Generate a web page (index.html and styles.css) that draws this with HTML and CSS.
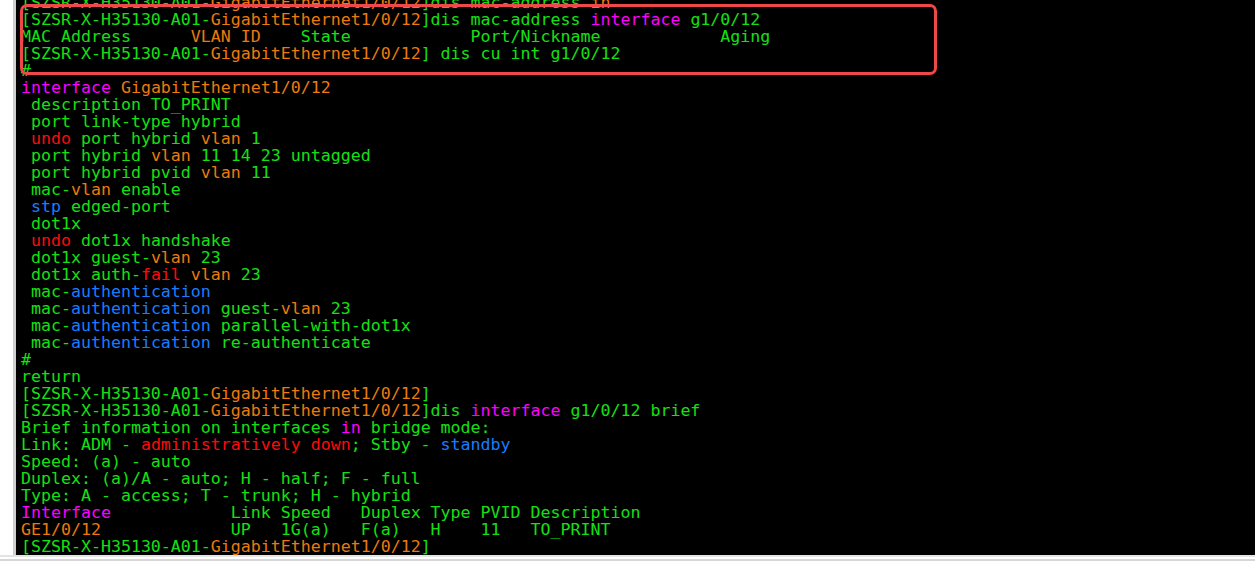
FILE: index.html
```html
<!DOCTYPE html>
<html lang="en">
<head>
<meta charset="utf-8">
<title>Terminal</title>
<link rel="stylesheet" href="styles.css">
</head>
<body>
<div class="window">
  <div class="main">
    <div class="terminal">
<pre class="screen"><span class="g">[SZSR-X-H35130-A01-</span><span class="o">GigabitEthernet1/0/12</span><span class="g">]dis mac-address </span><span class="o">in</span>
<span class="g">[SZSR-X-H35130-A01-</span><span class="o">GigabitEthernet1/0/12</span><span class="g">]dis mac-address </span><span class="m">interface</span><span class="g"> g1/0/12</span>
<span class="g">MAC Address      </span><span class="o">VLAN ID</span><span class="g">    State            Port/Nickname            Aging</span>
<span class="g">[SZSR-X-H35130-A01-</span><span class="o">GigabitEthernet1/0/12</span><span class="g">] dis cu int g1/0/12</span>
<span class="g">#</span>
<span class="m">interface</span><span class="o"> GigabitEthernet1/0/12</span>
<span class="g"> description TO_PRINT</span>
<span class="g"> port link-type hybrid</span>
<span class="r"> undo</span><span class="g"> port hybrid </span><span class="o">vlan</span><span class="g"> 1</span>
<span class="g"> port hybrid </span><span class="o">vlan</span><span class="g"> 11 14 23 untagged</span>
<span class="g"> port hybrid pvid </span><span class="o">vlan</span><span class="g"> 11</span>
<span class="g"> mac-</span><span class="o">vlan</span><span class="g"> enable</span>
<span class="b"> stp</span><span class="g"> edged-port</span>
<span class="g"> dot1x</span>
<span class="r"> undo</span><span class="g"> dot1x handshake</span>
<span class="g"> dot1x guest-</span><span class="o">vlan</span><span class="g"> 23</span>
<span class="g"> dot1x auth-</span><span class="r">fail</span><span class="g"> </span><span class="o">vlan</span><span class="g"> 23</span>
<span class="g"> mac-</span><span class="b">authentication</span>
<span class="g"> mac-</span><span class="b">authentication</span><span class="g"> guest-</span><span class="o">vlan</span><span class="g"> 23</span>
<span class="g"> mac-</span><span class="b">authentication</span><span class="g"> parallel-with-dot1x</span>
<span class="g"> mac-</span><span class="b">authentication</span><span class="g"> re-authenticate</span>
<span class="g">#</span>
<span class="g">return</span>
<span class="g">[SZSR-X-H35130-A01-</span><span class="o">GigabitEthernet1/0/12</span><span class="g">]</span>
<span class="g">[SZSR-X-H35130-A01-</span><span class="o">GigabitEthernet1/0/12</span><span class="g">]dis </span><span class="m">interface</span><span class="g"> g1/0/12 brief</span>
<span class="g">Brief information on interfaces </span><span class="m">in</span><span class="g"> bridge mode:</span>
<span class="g">Link: ADM - </span><span class="r">administratively down</span><span class="g">; Stby - </span><span class="b">standby</span>
<span class="g">Speed: (a) - auto</span>
<span class="g">Duplex: (a)/A - auto; H - half; F - full</span>
<span class="g">Type: A - access; T - trunk; H - hybrid</span>
<span class="m">Interface</span><span class="g">            Link Speed   Duplex Type PVID Description</span>
<span class="o">GE1/0/12</span><span class="g">             UP   1G(a)   F(a)   H    11   TO_PRINT</span>
<span class="g">[SZSR-X-H35130-A01-</span><span class="o">GigabitEthernet1/0/12</span><span class="g">]</span></pre>
      <div class="highlight"></div>
    </div>
  </div>
  <div class="statusbar"></div>
</div>
</body>
</html>
```

FILE: styles.css
```css
html, body {
  margin: 0;
  padding: 0;
  background: #ffffff;
}

.window {
  width: 1255px;
  height: 561px;
  overflow: hidden;
  display: flex;
  flex-direction: column;
}

.main {
  height: 555px;
  display: flex;
  padding-left: 13px;
  background: #ffffff;
}

.terminal {
  flex: 1;
  position: relative;
  overflow: hidden;
  background: #000000;
  border-left: 3px solid #cfcfcf;
  display: flex;
  flex-direction: column;
  justify-content: flex-end;
  padding-left: 5px;
}

.screen {
  margin: 0;
  font-family: "DejaVu Sans Mono", "Liberation Mono", monospace;
  font-size: 16.6px;
  line-height: 17px;
  white-space: pre;
  color: #14e014;
}

.g { color: #14e014; }
.o { color: #ec7a0c; }
.m { color: #ff00ff; }
.r { color: #ff0a0a; }
.b { color: #1a7cff; }

.highlight {
  position: absolute;
  left: 4px;
  top: 4px;
  width: 911px;
  height: 65px;
  border: 3.5px solid #ef4848;
  border-radius: 7px;
}

.statusbar {
  height: 6px;
  border-top: 2px solid #e4e4e4;
  border-bottom: 2px solid #d6d6d6;
  background: #ffffff;
  box-sizing: border-box;
}
```
